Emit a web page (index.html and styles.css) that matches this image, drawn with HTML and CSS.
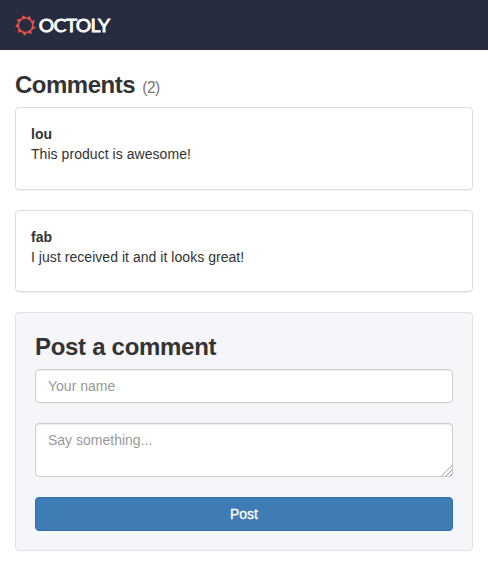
FILE: index.html
```html
<!DOCTYPE html>
<html lang="en">
<head>
<meta charset="utf-8">
<title>Octoly comments</title>
<link rel="stylesheet" href="styles.css">
</head>
<body>
<header class="navbar">
  <svg class="logo" width="96" height="24" viewBox="0 0 96 24" role="img" aria-label="Octoly">
    <defs><path id="tooth" d="M7.2 5.5 L7.2 2.2 L12.4 4.8 Z"/></defs>
    <g fill="#e5544b">
      <circle cx="10.5" cy="12.3" r="7.1" fill="none" stroke="#e5544b" stroke-width="1.3"/>
      <use href="#tooth"/>
      <use href="#tooth" transform="rotate(40 10.5 12.3)"/>
      <use href="#tooth" transform="rotate(80 10.5 12.3)"/>
      <use href="#tooth" transform="rotate(120 10.5 12.3)"/>
      <use href="#tooth" transform="rotate(160 10.5 12.3)"/>
      <use href="#tooth" transform="rotate(200 10.5 12.3)"/>
      <use href="#tooth" transform="rotate(240 10.5 12.3)"/>
      <use href="#tooth" transform="rotate(280 10.5 12.3)"/>
      <use href="#tooth" transform="rotate(320 10.5 12.3)"/>
    </g>
    <text class="wordmark" x="23.8" y="18.7" textLength="70.5" lengthAdjust="spacingAndGlyphs">OCTOLY</text>
  </svg>
</header>
<main class="container">
  <h3 class="comments-title">Comments <small>(2)</small></h3>
  <article class="panel">
    <strong>lou</strong>
    <p class="first-text">This product is awesome!</p>
  </article>
  <article class="panel">
    <strong>fab</strong>
    <p class="second-text">I just received it and it looks great!</p>
  </article>
  <form class="well">
    <h3 class="form-title">Post a comment</h3>
    <input class="control" type="text" placeholder="Your name">
    <div class="message">
      <textarea class="control" placeholder="Say something..."></textarea>
      <svg class="grip" width="13" height="12" viewBox="0 0 13 12"><path d="M1 11.5 12.5 0M5.5 11.5 12.5 4.5M9.5 11.5 12.5 8.5"/></svg>
    </div>
    <button class="submit" type="button">Post</button>
  </form>
</main>
</body>
</html>
```

FILE: styles.css
```css
* { box-sizing: border-box; }
body {
  margin: 0;
  background: #fff;
  color: #333;
  font: 14px/20px "Liberation Sans", Arial, sans-serif;
}
.navbar {
  height: 50px;
  padding: 13px 15px;
  background: #272c40;
  border-bottom: 1px solid #202538;
}
.logo { display: block; overflow: visible; }
.wordmark {
  fill: #fff;
  stroke: #fff;
  stroke-width: .8px;
  font: 17.5px Lato, sans-serif;
  letter-spacing: -.6px;
}
.container { padding: 22px 15px 0; }
h3 {
  margin: 0;
  font-size: 24px;
  line-height: 26px;
  font-weight: bold;
  white-space: nowrap;
}
.comments-title { height: 26px; margin-bottom: 9px; letter-spacing: -.5px; }
.comments-title small {
  margin-left: 1px;
  color: #777;
  font-size: 15.6px;
  line-height: 1;
  font-weight: normal;
  letter-spacing: -.5px;
}
.panel {
  height: 82.6px;
  margin-bottom: 20px;
  padding: 16px 15px 15px;
  border: 1px solid #ddd;
  border-radius: 4px;
  box-shadow: 0 1px 1px rgba(0, 0, 0, .05);
}
.panel strong { display: block; }
.panel p { width: max-content; margin: 0; }
.first-text { letter-spacing: .05px; }
.second-text { letter-spacing: .04px; }
.well {
  height: 239px;
  padding: 21px 19px 19px;
  background: #f5f6fa;
  border: 1px solid #dfe1e5;
  border-radius: 4px;
}
.form-title { margin-bottom: 9px; letter-spacing: -.3px; }
.control {
  display: block;
  width: 100%;
  height: 34px;
  padding: 6px 12px;
  background: #fff;
  border: 1px solid #ccc;
  border-radius: 4px;
  box-shadow: inset 0 1px 1px rgba(0, 0, 0, .075);
  color: #555;
  font: inherit;
}
.control::placeholder { color: #999; opacity: 1; }
.message { position: relative; margin: 20px 0; }
.message .control { height: 54px; resize: none; }
.grip {
  position: absolute;
  right: 0;
  bottom: 0;
  fill: none;
  stroke: #999;
  stroke-width: 1;
}
.submit {
  display: block;
  width: 100%;
  height: 34px;
  padding: 6px 12px;
  background: #3f7bb5;
  border: 1px solid #336ea6;
  border-radius: 4px;
  color: #fff;
  font: inherit;
  -webkit-text-stroke: .3px #fff;
}
```
